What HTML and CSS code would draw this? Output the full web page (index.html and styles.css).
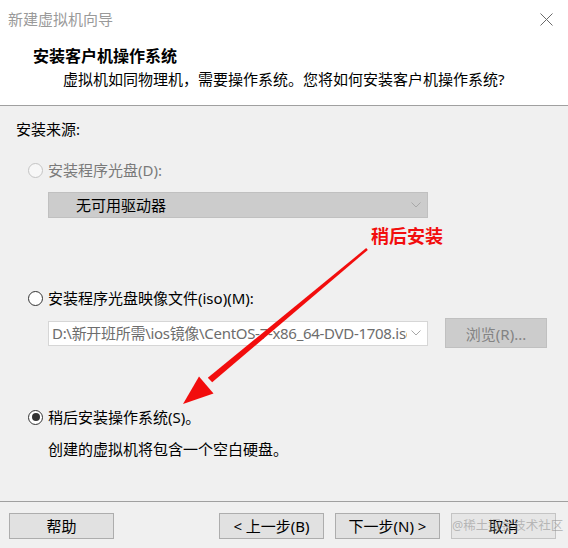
FILE: index.html
```html
<!DOCTYPE html>
<html lang="zh">
<head>
<meta charset="utf-8">
<title>新建虚拟机向导</title>
<link rel="stylesheet" href="styles.css">
</head>
<body>
<div class="window">
  <div class="titlebar">
    <span class="title">新建虚拟机向导</span>
    <svg class="close" width="13" height="13" viewBox="0 0 13 13"><path d="M0.5 0.5 L12.5 12.5 M12.5 0.5 L0.5 12.5" stroke="#6a6a6a" stroke-width="1" fill="none"/></svg>
  </div>
  <div class="header">
    <div class="h-title">安装客户机操作系统</div>
    <div class="h-sub">虚拟机如同物理机，需要操作系统。您将如何安装客户机操作系统?</div>
  </div>
  <div class="content">
    <div class="section-label">安装来源:</div>
    <div class="options">
      <div class="radio-row disabled r-disc"><span class="radio"></span><span class="lbl">安装程序光盘(D):</span></div>
      <div class="select disabled">
        <span class="sel-text">无可用驱动器</span>
        <svg class="chev" width="10" height="6" viewBox="0 0 10 6"><polyline points="0.5,0.5 5,5 9.5,0.5" fill="none" stroke="#a8a8a8" stroke-width="1"/></svg>
      </div>
      <div class="radio-row r-iso"><span class="radio"></span><span class="lbl">安装程序光盘映像文件(iso)(M):</span></div>
      <div class="field-row">
        <div class="combo">
          <span class="combo-text">D:\新开班所需\ios镜像\CentOS-7-x86_64-DVD-1708.iso</span>
          <svg class="chev" width="10" height="6" viewBox="0 0 10 6"><polyline points="0.5,0.5 5,5 9.5,0.5" fill="none" stroke="#a8a8a8" stroke-width="1"/></svg>
        </div>
        <div class="browse">浏览(R)...</div>
      </div>
      <div class="radio-row r-later"><span class="radio checked"></span><span class="lbl">稍后安装操作系统(S)。</span></div>
      <div class="desc">创建的虚拟机将包含一个空白硬盘。</div>
    </div>
  </div>
  <div class="footer">
    <div class="btn help">帮助</div>
    <div class="btn">&lt; 上一步(B)</div>
    <div class="btn">下一步(N) &gt;</div>
    <div class="btn cancel">取消</div>
  </div>

  <div class="annot">稍后安装</div>
  <svg class="arrow" width="568" height="548" viewBox="0 0 568 548">
    <polygon points="366.2,248.1 367.8,249.9 212.2,382.3 207.8,377.7" fill="#f20d0d"/>
    <polygon points="183,404 199,376.5 213.5,393.5" fill="#f20d0d"/>
  </svg>
  <div class="watermark">@稀土掘金技术社区</div>
</div>
</body>
</html>
```

FILE: styles.css
```css
* { box-sizing: border-box; }

html, body {
  margin: 0;
  padding: 0;
}

body {
  width: 568px;
  height: 548px;
  overflow: hidden;
  font-family: "Noto Sans", "Noto Sans CJK SC", sans-serif;
  font-size: 15px;
  color: #000;
  background: #f0f0f0;
}

.window {
  position: relative;
  width: 568px;
  height: 548px;
  display: flex;
  flex-direction: column;
}

.titlebar {
  height: 37px;
  background: #fff;
  display: flex;
  align-items: center;
  justify-content: space-between;
  padding: 0 15px 0 8px;
}

.title {
  color: #9a9a9a;
  line-height: 20px;
}

.close {
  display: block;
  margin-top: 2px;
}

.header {
  height: 69px;
  background: #fff;
  border-bottom: 1px solid #a0a0a0;
  padding-top: 8px;
}

.h-title {
  font-family: "Noto Sans CJK SC", sans-serif;
  font-weight: bold;
  font-size: 16px;
  line-height: 20px;
  padding-left: 33px;
}

.h-sub {
  line-height: 20px;
  margin-top: 4px;
  padding-left: 63px;
}

.content {
  height: 395px;
  padding-top: 13px;
}

.section-label {
  line-height: 20px;
  padding-left: 16px;
}

.options {
  padding-left: 28px;
}

.radio-row {
  display: flex;
  align-items: center;
  height: 20px;
  gap: 5px;
}

.radio {
  width: 15px;
  height: 15px;
  border-radius: 50%;
  border: 1px solid #333;
  background: #fff;
  display: flex;
  align-items: center;
  justify-content: center;
  flex: none;
}

.radio.checked::after {
  content: "";
  width: 8px;
  height: 8px;
  border-radius: 50%;
  background: #333;
}

.radio-row.disabled .radio {
  border-color: #c4c4c4;
  background: #f7f7f7;
}

.radio-row.disabled .lbl {
  color: #7a7a7a;
}

.lbl {
  line-height: 20px;
}

.r-disc { margin-top: 21px; }
.r-iso { margin-top: 70px; }
.r-later { margin-top: 59px; }

.select {
  margin-top: 12px;
  margin-left: 20px;
  width: 380px;
  height: 26px;
  background: #cccccc;
  border: 1px solid #c0c0c0;
  display: flex;
  align-items: center;
  justify-content: space-between;
  padding: 0 6px 0 27px;
}

.sel-text {
  line-height: 20px;
}

.chev {
  display: block;
  flex: none;
}

.field-row {
  margin-top: 10px;
  margin-left: 20px;
  display: flex;
  align-items: center;
  height: 30px;
}

.combo {
  width: 380px;
  height: 25px;
  background: #fff;
  border: 1px solid #d6d6d6;
  display: flex;
  align-items: center;
  padding: 0 6px 0 3px;
  gap: 4px;
}

.combo-text {
  flex: 1;
  overflow: hidden;
  white-space: nowrap;
  color: #6d6d6d;
  line-height: 20px;
  letter-spacing: -0.3px;
}

.browse {
  margin-left: 17px;
  width: 102px;
  height: 30px;
  background: #cccccc;
  border: 1px solid #c0c0c0;
  color: #838383;
  display: flex;
  align-items: center;
  justify-content: center;
}

.desc {
  margin-top: 12px;
  padding-left: 20px;
  line-height: 20px;
}

.footer {
  border-top: 1px solid #a0a0a0;
  padding: 11px 0 0 9px;
  display: flex;
  gap: 11px;
}

.btn {
  width: 105px;
  height: 26px;
  background: #e1e1e1;
  border: 1px solid #adadad;
  display: flex;
  align-items: center;
  justify-content: center;
  line-height: 20px;
}

.btn.help {
  margin-right: 94px;
}

.btn.cancel {
  border-color: #c4c4c4;
  background: #e6e6e6;
}

.annot {
  position: absolute;
  left: 371px;
  top: 223px;
  font-family: "Noto Sans CJK SC", sans-serif;
  font-weight: bold;
  font-size: 18px;
  line-height: 24px;
  color: #f20d0d;
}

.arrow {
  position: absolute;
  left: 0;
  top: 0;
  pointer-events: none;
}

.watermark {
  position: absolute;
  left: 452px;
  top: 516px;
  font-size: 12.5px;
  line-height: 20px;
  color: rgba(140, 140, 140, 0.55);
  white-space: nowrap;
}
```
